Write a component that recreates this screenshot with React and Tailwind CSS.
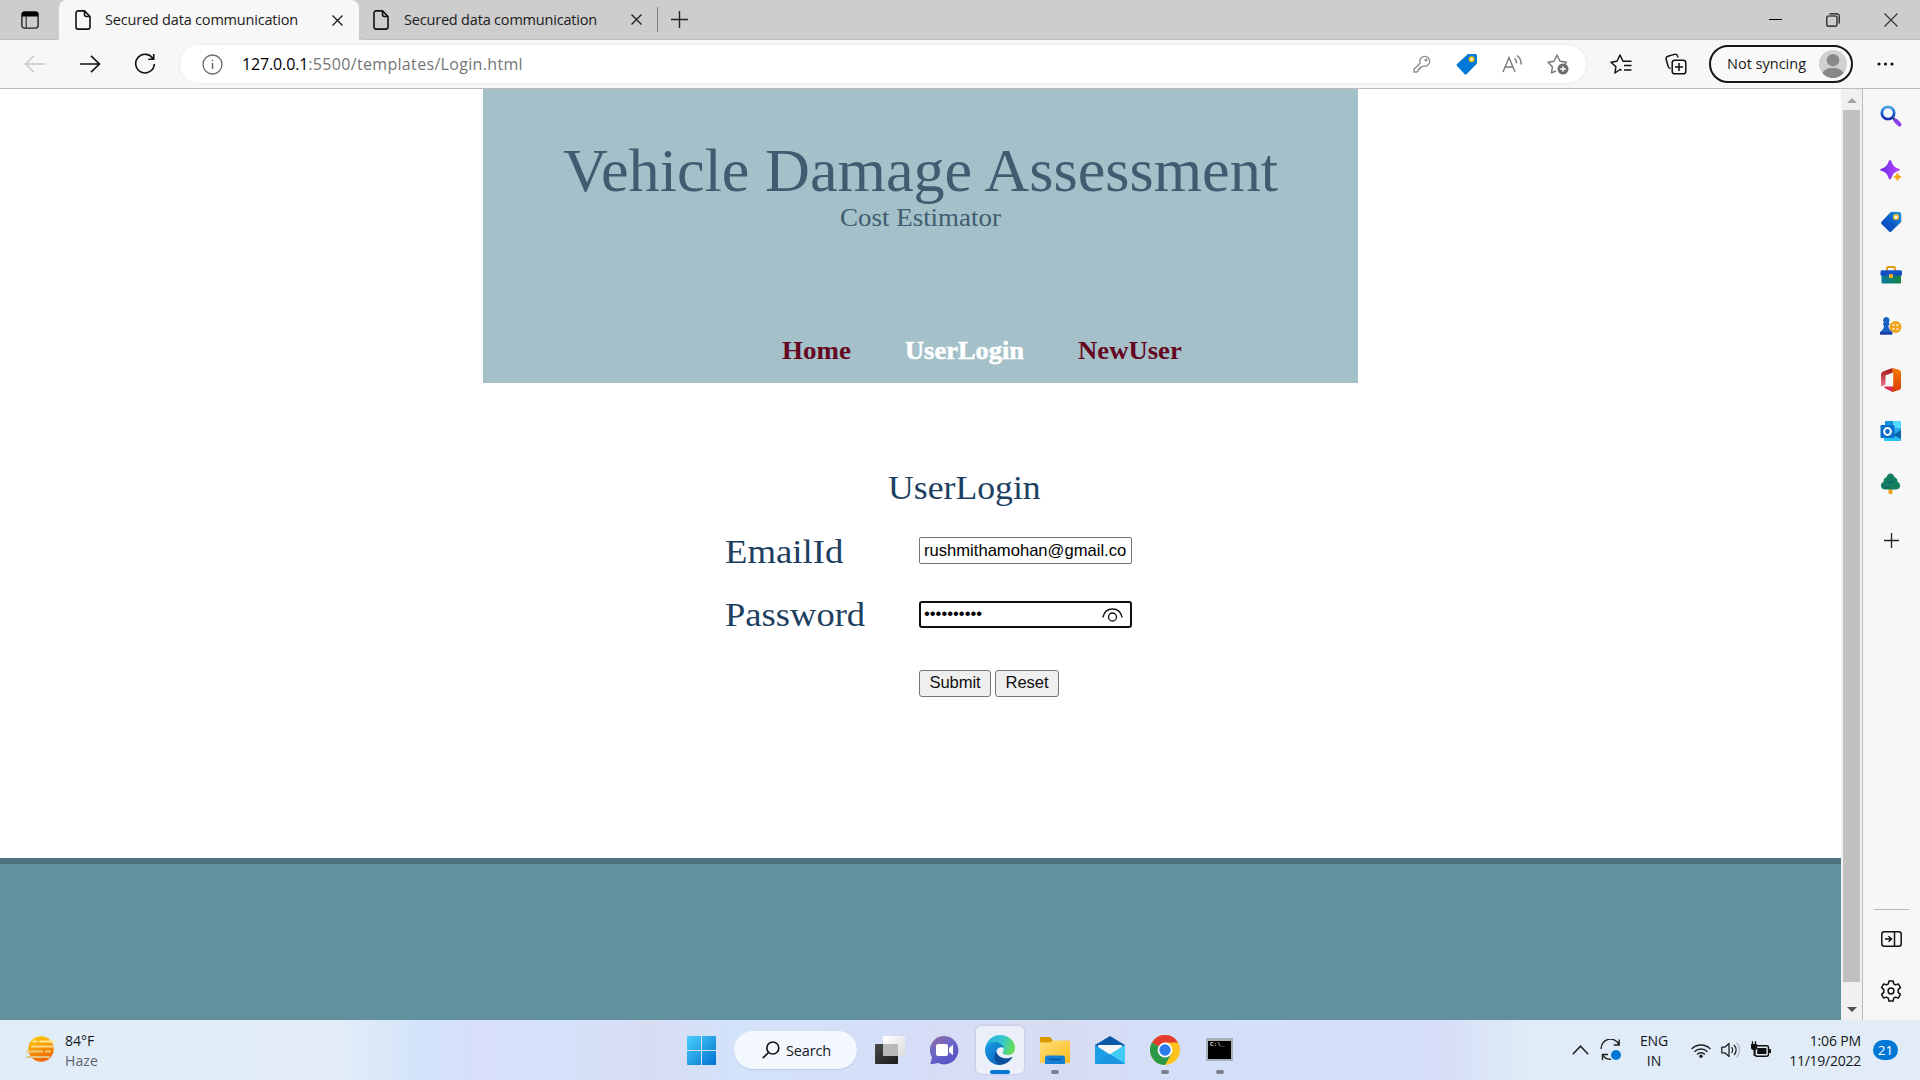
import React from "react";

const Doc = () => (
  <svg className="h-5 w-4 shrink-0" viewBox="0 0 16 20" fill="none" stroke="#111" strokeWidth="1.6" strokeLinejoin="round">
    <path d="M9.5 .9H3A2 2 0 0 0 1 2.9v14.2a2 2 0 0 0 2 2h10a2 2 0 0 0 2-2V6.5zM9.5 .9v3.6a2 2 0 0 0 2 2H15" />
  </svg>
);

const Cross = () => (
  <svg className="h-[11px] w-[11px] shrink-0" viewBox="0 0 11 11" stroke="#222" strokeWidth="1.4">
    <path d="M.5 .5l10 10M10.5 .5l-10 10" />
  </svg>
);

const Plus = () => (
  <svg className="h-[17px] w-[17px] shrink-0" viewBox="0 0 17 17" stroke="#222" strokeWidth="1.4">
    <path d="M8.5 0v17M0 8.5h17" />
  </svg>
);

function TabBar() {
  return (
    <div className="flex h-10 shrink-0 bg-[#cdcdcd]">
      <div className="flex w-[59px] items-center rounded-br-md border-b border-[#bdbdbd] pl-[21px]">
        <svg className="h-[18px] w-[18px]" viewBox="0 0 18 18">
          <rect x=".9" y=".9" width="16.2" height="16.2" rx="2.6" fill="none" stroke="#222" strokeWidth="1.4" />
          <path d="M.9 5.5V3A2.2 2.2 0 0 1 3.1.8h11.8A2.2 2.2 0 0 1 17.1 3v2.5z" fill="#000" />
          <path d="M5.2 5v12" stroke="#333" strokeWidth="1.2" />
        </svg>
      </div>
      <div className="flex w-[300px] items-center rounded-t-lg bg-[#f7f7f7] pl-4 pr-[16px]">
        <Doc />
        <span className="ml-[14px] flex-1 whitespace-nowrap text-[14.5px] leading-5 tracking-[-0.19px] text-[#1b1b1b]">Secured data communication</span>
        <Cross />
      </div>
      <div className="flex flex-1 items-center rounded-bl-md border-b border-[#bdbdbd] pl-[14px]">
        <Doc />
        <span className="ml-[15px] w-[227px] whitespace-nowrap text-[14.5px] leading-5 tracking-[-0.19px] text-[#1b1b1b]">Secured data communication</span>
        <Cross />
        <div className="ml-[15px] mr-[13px] h-[25px] w-px bg-[#808080]" />
        <Plus />
        <div className="ml-auto flex items-center pr-[22px]">
          <div className="mr-11 h-px w-[13px] bg-black" />
          <svg className="mr-11 h-[14px] w-[14px]" viewBox="0 0 14 14" fill="none" stroke="#111" strokeWidth="1.2">
            <rect x=".8" y="3" width="10.2" height="10.2" rx="1.5" />
            <path d="M3.5 .8h7.5a2.2 2.2 0 0 1 2.2 2.2v7.5" />
          </svg>
          <svg className="h-[14px] w-[14px]" viewBox="0 0 14 14" stroke="#333" strokeWidth="1.2">
            <path d="M.5 .5l13 13M13.5 .5l-13 13" />
          </svg>
        </div>
      </div>
    </div>
  );
}

function Toolbar() {
  return (
    <div className="flex h-[49px] shrink-0 items-center border-b border-[#bcbcbc] bg-[#f7f7f7] pl-6">
      <svg className="h-[18px] w-[21px]" viewBox="0 0 21 18" fill="none" stroke="#c8c8c8" strokeWidth="1.5">
        <path d="M21 9H1.5M10 .8L1.5 9l8.5 8.2" />
      </svg>
      <svg className="ml-[35px] h-[18px] w-[21px]" viewBox="0 0 21 18" fill="none" stroke="#111" strokeWidth="1.6">
        <path d="M0 9h19.5M11 .8L19.5 9 11 17.2" />
      </svg>
      <svg className="ml-[33px] h-[22px] w-[22px]" viewBox="0 0 22 22" fill="none" stroke="#111" strokeWidth="1.6">
        <path d="M19.2 6.2A9.3 9.3 0 1 0 20.3 11M19.7 1v5.3h-5.4" />
      </svg>
      <div className="ml-[24px] flex h-[38px] w-[1406px] items-center rounded-full bg-white pl-[22px] pr-[17px] shadow-[0_0_4px_rgba(0,0,0,0.07)]">
        <svg className="h-[21px] w-[21px]" viewBox="0 0 21 21" fill="none" stroke="#6c6c6c" strokeWidth="1.3">
          <circle cx="10.5" cy="10.5" r="9.5" />
          <path d="M10.5 9v6M10.5 5.7v1.6" strokeWidth="1.5" />
        </svg>
        <span className="ml-[19px] whitespace-nowrap text-[16px] leading-6 tracking-[-0.14px] text-black">127.0.0.1</span>
        <span className="whitespace-nowrap text-[16px] leading-6 tracking-[0.33px] text-[#757575]">:5500/templates/Login.html</span>
        <svg className="ml-auto h-[18px] w-[18px]" viewBox="0 0 18 18" fill="none" stroke="#8a8a8a" strokeWidth="1.3" strokeLinejoin="round">
          <path d="M7.1 8.2A5 5 0 1 1 10 11l-1.3 1.2H7v1.8H5.3v1.7L3.9 17H1v-2.8z" />
          <circle cx="13" cy="5" r=".9" />
        </svg>
        <svg className="ml-[25px] h-[22px] w-[22px]" viewBox="0 0 22 22">
          <path d="M12 1h7.5A1.7 1.7 0 0 1 21 2.7V10.5L10.5 21.2a1.2 1.2 0 0 1-1.7 0L1 12.9a1.5 1.5 0 0 1 0-2z" fill="#0078d7" />
          <circle cx="15.7" cy="6.3" r="2.2" fill="#fff" stroke="#f5b800" strokeWidth="1.6" />
        </svg>
        <svg className="ml-[24px] h-5 w-5" viewBox="0 0 20 20" fill="none" stroke="#777" strokeWidth="1.4">
          <path d="M1 18L7 3.5 13 18M3.2 13h7.6M12.5 4.2a6 6 0 0 1 2 5M15 1.5a10 10 0 0 1 4 9" />
        </svg>
        <svg className="ml-[25px] h-[22px] w-[22px]" viewBox="0 0 22 22" fill="none" stroke="#777" strokeWidth="1.4" strokeLinejoin="round">
          <path d="M9 18L4.5 19.8l.9-6L1 9.2l6-.9L10 2l3 6.3 6.5.9-1.5 2" />
          <circle cx="16" cy="16" r="5.5" fill="#6e6e6e" stroke="none" />
          <path d="M16 13.2v5.6M13.2 16h5.6" stroke="#fff" />
        </svg>
      </div>
      <svg className="ml-[24px] h-[22px] w-[22px]" viewBox="0 0 22 22" fill="none" stroke="#111" strokeWidth="1.5" strokeLinejoin="round">
        <path d="M11.5 17.2L10 16.5l-5 3.5.9-6.2L1 9.2l6-.9L10 2l3 6.3h8.5M14 12.5h7.5M14 17h7.5" />
      </svg>
      <svg className="ml-[33px] h-[22px] w-[22px]" viewBox="0 0 22 22" fill="none" stroke="#111" strokeWidth="1.5">
        <rect x="7.2" y="7.2" width="13.6" height="13.6" rx="2.6" />
        <path d="M14 10v8M10 14h8M5.5 15.5A3 3 0 0 1 3 13L1.2 6.5A2.6 2.6 0 0 1 3 3.3L9.5 1.4a2.6 2.6 0 0 1 3.2 1.8L13 4.5" />
      </svg>
      <div className="ml-[22px] flex h-[38px] w-[144px] items-center rounded-full border-2 border-[#161616] bg-[#f9f9f9] pl-[16px]">
        <span className="w-[92px] whitespace-nowrap text-[14.5px] leading-5 text-[#1b1b1b]">Not syncing</span>
        <svg className="h-7 w-7" viewBox="0 0 28 28">
          <circle cx="14" cy="14" r="14" fill="#d2d0ce" />
          <circle cx="14" cy="10.2" r="6.2" fill="#8a8886" />
          <path d="M3.5 23.2C4.5 20 8.5 18 14 18s9.500 2 10.5 5.2a14 14 0 0 1-21 0z" fill="#8a8886" />
        </svg>
      </div>
      <svg className="ml-6 h-1 w-[17px]" viewBox="0 0 17 4" fill="#111">
        <circle cx="2" cy="2" r="1.6" /><circle cx="8.5" cy="2" r="1.6" /><circle cx="15" cy="2" r="1.6" />
      </svg>
    </div>
  );
}

function Page() {
  return (
    <main className="flex w-[1841px] flex-col bg-white font-['Liberation_Serif',serif]">
      <header className="ml-[483px] flex h-[294px] w-[875px] flex-col bg-[#a4c0c9] pt-[50px] text-[#3f5c71]">
        <h1 className="scale-x-[1.028] whitespace-nowrap text-center text-[60.5px] leading-[64px]">Vehicle Damage Assessment</h1>
        <p className="scale-x-[1.065] text-center text-[25.3px] leading-[28px]">Cost Estimator</p>
        <nav className="mt-[106px] flex pl-[299px] text-[24.5px] font-bold leading-7 text-[#660722]">
          <a className="w-[123px] origin-left scale-x-[1.1]">Home</a>
          <a className="w-[173px] origin-left scale-x-[1.08] text-white [-webkit-text-stroke:0.5px_white]">UserLogin</a>
          <a className="origin-left scale-x-[1.09]">NewUser</a>
        </nav>
      </header>
      <form className="flex h-[475px] flex-col pl-[725px] pt-[85px] text-[34px] leading-10 text-[#1d3f61]">
        <h2 className="ml-[163px] w-[200px] origin-left scale-x-[1.05]">UserLogin</h2>
        <div className="mt-6 flex">
          <label className="w-[194px] origin-left scale-x-[1.08]">EmailId</label>
          <div className="mt-[5px] flex h-[27px] w-[213px] items-center rounded-[2px] border border-[#767676] pl-1 font-['Liberation_Sans',sans-serif] text-[16.6px] leading-5 text-black">
            rushmithamohan@gmail.co
          </div>
        </div>
        <div className="mt-[23px] flex">
          <label className="w-[194px] origin-left scale-x-[1.075]">Password</label>
          <div className="mt-[6px] flex h-[27px] w-[213px] items-center justify-between rounded-[3px] border-2 border-[#101010] pl-[3px] pr-[7px] font-['Liberation_Sans',sans-serif] text-[16.6px] leading-5 text-black">
            <span className="mb-0.5">••••••••••</span>
            <svg className="h-[14px] w-[21px]" viewBox="0 0 21 14" fill="none" stroke="#111" strokeWidth="1.3">
              <path d="M.8 9.5C2 4 6 1 10.5 1s8.500 3 9.7 8.5" />
              <circle cx="10.5" cy="9" r="4" />
            </svg>
          </div>
        </div>
        <div className="mt-[35px] flex gap-1 pl-[194px] font-['Liberation_Sans',sans-serif] text-[16.6px] leading-[22px] text-[#111]">
          <button type="button" className="h-[27px] w-[72px] rounded-[3px] border border-[#767676] bg-[#efefef] pb-px tracking-[-0.1px]">Submit</button>
          <button type="button" className="h-[27px] w-16 rounded-[3px] border border-[#767676] bg-[#efefef] pb-px tracking-[-0.1px]">Reset</button>
        </div>
      </form>
      <footer className="flex-1 border-t-[6px] border-[#4c727d] bg-[#61919f]" />
    </main>
  );
}

function ScrollBar() {
  return (
    <div className="flex w-[22px] flex-col items-center border-r border-[#bcbcbc] bg-[#f0f0f0]">
      <svg className="mt-[9px] h-[5px] w-[10px]" viewBox="0 0 10 5"><path d="M0 5l5-5 5 5z" fill="#a3a3a3" /></svg>
      <div className="mt-[7px] h-[872px] w-[17px] bg-[#c1c1c1]" />
      <svg className="mt-[25px] h-[5px] w-[10px]" viewBox="0 0 10 5"><path d="M0 0l5 5 5-5z" fill="#505050" /></svg>
    </div>
  );
}

function SideIcons() {
  const box = "h-6 w-6 shrink-0";
  return (
    <aside className="flex w-[57px] flex-col items-center bg-[#f7f7f7] pr-px pt-[15px]">
      <svg className={box} viewBox="0 0 24 24">
        <defs><linearGradient id="mag" x1="0" y1="0" x2="0" y2="1"><stop stopColor="#46a6e0" /><stop offset=".6" stopColor="#1251cc" /><stop offset="1" stopColor="#1b30b5" /></linearGradient></defs>
        <circle cx="9" cy="9" r="6.2" fill="#eef5fc" stroke="url(#mag)" strokeWidth="2.7" />
        <path d="M14 14l3 3" stroke="#3b3a75" strokeWidth="2.5" /><path d="M16.5 16.5l4 4" stroke="#8a3fe8" strokeWidth="4" strokeLinecap="round" />
      </svg>
      <svg className={`${box} mt-[31px]`} viewBox="0 0 24 24">
        <defs><linearGradient id="spark" x1="0" x2="1"><stop stopColor="#6a2be0" /><stop offset="1" stopColor="#b545ff" /></linearGradient></defs>
        <path d="M11 1q1.200 0 1.600 2Q14 8 19 9.400q2 .6 2 1.400t-2 1.300Q14 13.500 12.600 18.500 12 20.500 11 20.500t-1.600-2Q8 13.500 3 12.100 1 11.600 1 10.800T3 9.400Q8 8 9.400 3 9.900 1 11 1z" fill="url(#spark)" />
        <path d="M18.5 12.500q1 4.300 5 5.500-4 1.200-5 5-1.200-4-5-5 4-1.200 5-5.500z" fill="#f4a91c" stroke="#f7f7f7" strokeWidth=".6" />
      </svg>
      <svg className={`${box} mt-[27px]`} viewBox="0 0 24 24">
        <defs><linearGradient id="tag" x1="0" y1="1" x2="1" y2="0"><stop stopColor="#0a46b8" /><stop offset=".5" stopColor="#0c59c7" /><stop offset="1" stopColor="#219ad8" /></linearGradient></defs>
        <path d="M13 1.800l7.500.2a2 2 0 0 1 1.700 2v7.200c0 .7-.3 1-.8 1.600L12.300 21.600a1.600 1.600 0 0 1-2.200 0L2.500 14a1.600 1.600 0 0 1 0-2.200l8.800-9.200a2 2 0 0 1 1.700-.8z" fill="url(#tag)" />
        <circle cx="17" cy="7" r="2.300" fill="#fff" stroke="#f5bb2b" strokeWidth="1.500" />
      </svg>
      <svg className={`${box} mt-[29px]`} viewBox="0 0 24 24">
        <defs><linearGradient id="case" x1="0" x2="1"><stop stopColor="#087ba6" /><stop offset="1" stopColor="#16833d" /></linearGradient></defs>
        <path d="M8 7.500V5.200A1.200 1.200 0 0 1 9.200 4h5.600A1.200 1.200 0 0 1 16 5.200v2.300" fill="none" stroke="#e39a1f" strokeWidth="2" />
        <rect x="2.500" y="11" width="19.500" height="9.500" rx="1.200" fill="url(#case)" /><rect x="1.500" y="7.300" width="21.500" height="5.500" rx="1.500" fill="#1050c4" />
        <rect x="10" y="11" width="4" height="4" rx="1" fill="#f5ae28" />
      </svg>
      <svg className={`${box} mt-[28px]`} viewBox="0 0 24 24">
        <circle cx="16.500" cy="12" r="6" fill="#efa31d" /><g fill="#fff3d0"><circle cx="14.500" cy="10" r="1.100" /><circle cx="18.500" cy="10" r="1.100" /><circle cx="14.500" cy="14" r="1.100" /><circle cx="18.500" cy="14" r="1.100" /></g>
        <path d="M7.300 2a3.400 3.400 0 0 1 2.300 5.700l.9 1v1.500H9.300c.2 3 1.200 4.500 3 6 .8.700 1 1.800 1 3.300H1c0-1.500.2-2.600 1-3.300 2-1.500 2.900-3 3.100-6H4V8.700l1-1A3.400 3.400 0 0 1 7.300 2z" fill="#175fc0" />
        <path d="M1 17.200h12.300v2.300H1z" fill="#1c38a8" />
      </svg>
      <svg className={`${box} mt-[29px]`} viewBox="0 0 24 24">
        <defs><linearGradient id="ofl" x1="0" y1="0" x2="0" y2="1"><stop stopColor="#a3130f" /><stop offset="1" stopColor="#e8758f" /></linearGradient><linearGradient id="ofr" x1="0" y1="0" x2="0" y2="1"><stop stopColor="#f57a00" /><stop offset="1" stopColor="#d83b01" /></linearGradient></defs>
        <path d="M13.500 0L4 3.500Q2 4.300 2 6.500v11Q2 19 3.500 18l3-1.500V7.500L14 4.500z" fill="url(#ofl)" />
        <path d="M5.500 18.500H15V23.500l-2 .3-6.500-3.400q-1.500-1-1-1.900z" fill="#dc2a4e" />
        <path d="M13.500 0L20 1.800q2 .7 2 2.700v15q0 2-2 2.600L13 24l1.200-5V4.500z" fill="url(#ofr)" />
      </svg>
      <svg className={`${box} mt-[27px]`} viewBox="0 0 24 24">
        <rect x="6" y="2" width="16" height="18" rx="1" fill="#28a8ea" /><path d="M14 2h7a1 1 0 0 1 1 1v6h-8z" fill="#50d9ff" /><path d="M6 2h8v7H6z" fill="#1490df" />
        <path d="M5 12l9 4 8-4.500V21a1 1 0 0 1-1 1H6a1 1 0 0 1-1-1z" fill="#28c1f3" /><path d="M14 16l8-5v9z" fill="#0a63a9" />
        <rect x="1.500" y="6" width="14" height="13" rx="1.200" fill="#0a6fc9" /><circle cx="8.500" cy="12.500" r="3.400" fill="none" stroke="#fff" strokeWidth="2" />
      </svg>
      <svg className={`${box} mt-[29px]`} viewBox="0 0 24 24">
        <rect x="9.500" y="16" width="4" height="6" rx="1" fill="#eda21f" />
        <path d="M11.500 1.500c2 0 3.400 1.500 3.700 3.500 2.300.7 3.600 2.300 3.200 4.800 1.800.7 3 2.400 2.600 4.500-.4 2.200-2 3.200-4 3.200H6c-2 0-3.600-1-4-3.200-.3-2.100.8-3.800 2.600-4.500C4.200 7.300 5.500 5.700 7.800 5c.3-2 1.700-3.500 3.700-3.500z" fill="#128060" />
        <path d="M8 9a4 4 0 0 0 6 0M5 14a4 4 0 0 0 6 1" fill="none" stroke="#0b6170" strokeWidth="1.200" />
      </svg>
      <svg className="mt-[37px] h-[15px] w-[15px] shrink-0" viewBox="0 0 15 15" stroke="#222" strokeWidth="1.300"><path d="M7.500 0v15M0 7.500h15" /></svg>
      <div className="mt-[361px] h-px w-[35px] bg-[#b8b8b8]" />
      <svg className="mt-[21px] h-4 w-[21px] shrink-0" viewBox="0 0 21 16" fill="none" stroke="#111" strokeWidth="1.500">
        <rect x=".8" y=".8" width="19.400" height="14.400" rx="2.500" /><path d="M13.500 1v14M4 8h6M7.500 5.200L10.500 8l-3 2.800" />
      </svg>
      <svg className="mt-[33px] h-[22px] w-[22px] shrink-0" viewBox="0 0 22 22" fill="none" stroke="#111" strokeWidth="1.500" strokeLinejoin="round">
        <path d="M8.900 1h4.200l.6 2.900 1.800 1 2.800-1 2.100 3.700-2.200 2v2.800l2.200 2-2.100 3.700-2.800-1-1.800 1-.6 2.900H8.900l-.6-2.900-1.800-1-2.800 1-2.100-3.700 2.200-2V9.600l-2.200-2 2.100-3.700 2.800 1 1.800-1z" />
        <circle cx="11" cy="11" r="2.900" />
      </svg>
    </aside>
  );
}

function TaskApp({ children, running }) {
  return (
    <div className="flex h-12 w-[55px] flex-col items-center">
      <div className="mt-2 flex h-8 items-center justify-center">{children}</div>
      <div className={running ? "mt-1 h-1 w-2 rounded-full bg-[#7b7f8b]" : "h-1"} />
    </div>
  );
}

function TaskBar() {
  return (
    <div className="flex h-[60px] shrink-0 items-center bg-[linear-gradient(90deg,#e1edf6_0px,#e2edf8_340px,#d3e2fa_430px,#d8dff9_480px,#d5e2f9_560px,#d8dcf3_650px,#d3e3fa_740px,#d5def7_900px,#d8dcf2_1060px,#d3dffa_1180px,#d6def7_1440px,#e0ecf7_1530px,#e1ecf7_1920px)] text-[14px] leading-5 text-[#15181c]">
      <svg className="ml-[26px] mb-[3px] h-7 w-[29px]" viewBox="0 0 29 28">
        <defs><linearGradient id="sun" x1="0" y1="0" x2=".3" y2="1"><stop stopColor="#ffd000" /><stop offset="1" stopColor="#ef6707" /></linearGradient></defs>
        <circle cx="15" cy="14" r="12.700" fill="url(#sun)" />
        <g strokeLinecap="round" strokeWidth="2.200"><path d="M7.500 6.500h3M14 6.500h14" stroke="#ffe79b" /><path d="M6 11.500h20" stroke="#ffd98a" /><path d="M1 16.500h15M20 16.500h4" stroke="#eccb7c" /><path d="M1 22h22" stroke="#e3c583" /></g>
      </svg>
      <div className="ml-[10px] mt-0.5 w-[101px]">
        <div>84°F</div>
        <div className="tracking-[0.1px] text-[#5c636d]">Haze</div>
      </div>
      <svg className="ml-[521px] h-[29px] w-[29px]" viewBox="0 0 29 29">
        <defs><linearGradient id="win" x1="0" y1="0" x2="1" y2="1" ><stop stopColor="#4bd0fb" /><stop offset="1" stopColor="#0071d0" /></linearGradient></defs>
        <path d="M1 0h13v14H0V1a1 1 0 0 1 1-1zM15 0h13a1 1 0 0 1 1 1v13H15zM0 15h14v14H1a1 1 0 0 1-1-1zM15 15h14v13a1 1 0 0 1-1 1H15z" fill="url(#win)" />
      </svg>
      <div className="ml-[18px] flex h-[38px] w-[123px] items-center rounded-full bg-[#f3f7fe] pl-[28px] shadow-[0_1px_1px_rgba(120,130,170,0.25)]">
        <svg className="h-[18px] w-[18px]" viewBox="0 0 18 18" fill="none" stroke="#161616" strokeWidth="1.700"><circle cx="10.800" cy="7" r="6" /><path d="M6.500 11.500L.8 17.200" /></svg>
        <span className="ml-[6px] mt-0.5 text-[14.5px] tracking-[-0.15px]">Search</span>
      </div>
      <div className="ml-[5px] flex">
        <TaskApp>
          <svg className="h-7 w-[30px]" viewBox="0 0 30 28">
            <defs><linearGradient id="tv1" x1="0" y1="0" x2="1" y2="1"><stop stopColor="#4a4a4a" /><stop offset="1" stopColor="#1b1b1b" /></linearGradient><linearGradient id="tv2" x1="0" y1="0" x2="1" y2="1"><stop stopColor="#fff" /><stop offset="1" stopColor="#dcdcdc" /></linearGradient></defs>
            <rect y="8" width="23" height="20" rx="1" fill="url(#tv1)" /><rect x="8" width="22" height="20" rx="1" fill="url(#tv2)" /><path d="M8 8h15v12H8z" fill="#b9b9b9" />
          </svg>
        </TaskApp>
        <TaskApp>
          <svg className="h-[29px] w-[29px]" viewBox="0 0 29 29">
            <defs><linearGradient id="chat" x1="0" y1="0" x2=".6" y2="1"><stop stopColor="#976b98" /><stop offset=".45" stopColor="#6f68c5" /><stop offset="1" stopColor="#5654c8" /></linearGradient></defs>
            <path d="M14.500 0A14.200 14.200 0 1 1 8 27l-6.800 1.200a.8.800 0 0 1-.8-1L2 21.500A14.200 14.200 0 0 1 14.500 0z" fill="url(#chat)" />
            <rect x="6" y="8" width="12" height="12" rx="2" fill="#fff" /><path d="M19 12l4-3.200v10.400L19 16z" fill="#fff" />
          </svg>
        </TaskApp>
        <div className="mx-[3.5px] flex h-12 w-12 flex-col items-center rounded-[5px] bg-[#ebeffa] shadow-[0_0_2px_rgba(110,120,160,0.45)]">
          <svg className="mt-[9px] h-[30px] w-[30px]" viewBox="0 0 30 30">
            <defs>
              <linearGradient id="edA" x1="0" y1=".3" x2="1" y2=".5"><stop stopColor="#2aaee0" /><stop offset=".55" stopColor="#35c6cf" /><stop offset="1" stopColor="#66e04e" /></linearGradient>
              <linearGradient id="edB" x1="0" y1="0" x2=".7" y2="1"><stop stopColor="#1a9de2" /><stop offset="1" stopColor="#0b66c0" /></linearGradient>
            </defs>
            <path d="M.2 13.500C1.500 5.500 7.500 0 15 0c8.500 0 15 6 15 13 0 4.500-3.200 7-7 7-3.500 0-5.500-1.200-5.500-2.500 0-1 1.200-1.500 1.200-3.500 0-3-3-5.500-7.200-5.500C6 8.500 1.500 11 .2 13.500z" fill="url(#edA)" />
            <path d="M0 15C.2 10.500 4 7 9.500 7c5.500 0 8.800 3 9.200 6.500C17 11.500 12.500 11.700 11.500 16c-1.200 5.500 3.500 10 8 10.500-1.500 1.500-3.500 3.200-6 3.400C6 29.300 0 23 0 15z" fill="url(#edB)" />
            <path d="M11.300 16.500C7.500 21 10 27.500 14.500 30c6 0 11-4 13.300-8.200-1.500.8-4 1.500-6.500 1.500-5 0-9-2.800-10-6.800z" fill="#0d4f9e" />
          </svg>
          <div className="mt-[5px] h-1 w-5 rounded-full bg-[#0078d4]" />
        </div>
        <TaskApp running>
          <svg className="h-[27px] w-[30px]" viewBox="0 0 30 27">
            <defs><linearGradient id="fo" x1="0" y1="0" x2="1" y2="1"><stop stopColor="#ffe07a" /><stop offset="1" stopColor="#fcb91d" /></linearGradient></defs>
            <path d="M1 0h9l3 3.500V7H0V1a1 1 0 0 1 1-1z" fill="#dc9a02" /><path d="M13 3.500h16a1 1 0 0 1 1 1V26H0V5.500h10z" fill="url(#fo)" />
            <path d="M5 27v-6a2.500 2.500 0 0 1 2.500-2.500h15A2.500 2.500 0 0 1 25 21v6z" fill="#127ed4" /><path d="M9 22.500h12" stroke="#0b559c" strokeWidth="1.300" />
          </svg>
        </TaskApp>
        <TaskApp>
          <svg className="h-7 w-[30px]" viewBox="0 0 30 28">
            <path d="M0 9L15 0l15 9v4H0z" fill="#0c58a8" /><path d="M3 9h24v8L15 22 3 16z" fill="#f5f6f7" />
            <path d="M0 9l15 9.500L30 9v18.500H0z" fill="#1d9ee6" /><path d="M30 9v18.500L15 18.500z" fill="#43cdf6" /><path d="M0 28l15-9.500L30 28z" fill="#1c95e0" />
          </svg>
        </TaskApp>
        <TaskApp running>
          <svg className="h-[30px] w-[30px]" viewBox="0 0 30 30">
            <circle cx="15" cy="15" r="15" fill="#fcc31e" />
            <path d="M15 15L2 7.500A15 15 0 0 1 28 7.500H15z" fill="#e33b2e" />
            <path d="M2 7.500A15 15 0 0 0 15 30l6.500-11.300L15 15z" fill="#2b9a47" />
            <circle cx="15" cy="15" r="7.400" fill="#fff" /><circle cx="15" cy="15" r="5.700" fill="#2e7bee" />
          </svg>
        </TaskApp>
        <TaskApp running>
          <div className="mb-0.5 flex h-[23px] w-[27px] border-2 border-t-[3px] border-[#aab0b8] bg-black pl-0.5">
            <span className="font-['Liberation_Mono',monospace] text-[6px] font-bold leading-[8px] text-[#ddd]">C:\_</span>
          </div>
        </TaskApp>
      </div>
      <div className="ml-auto flex items-center pr-[22px]">
        <svg className="h-[10px] w-[17px]" viewBox="0 0 17 10" fill="none" stroke="#222" strokeWidth="1.500"><path d="M.8 9.200L8.500 1.200l7.700 8" /></svg>
        <svg className="ml-[11px] h-[22px] w-[22px]" viewBox="0 0 22 22" fill="none" stroke="#222" strokeWidth="1.400">
          <path d="M1.200 10A9.300 9.300 0 0 1 19 5.700M19.200 .5v5.500h-5.500M2.500 21v-5.500H8M2.700 15.800a9.300 9.300 0 0 0 8.300 4.500" />
          <circle cx="16" cy="16" r="5" fill="#0078d7" stroke="none" />
        </svg>
        <div className="ml-[16px] mt-0.5 w-[32px] text-center tracking-[-0.1px]"><div>ENG</div><div>IN</div></div>
        <svg className="ml-[21px] h-[15px] w-5" viewBox="0 0 20 15" fill="none" stroke="#222" strokeWidth="1.500">
          <path d="M.7 6a13 13 0 0 1 18.600 0M3.500 8.700a9.200 9.200 0 0 1 13 0M6.200 11.400a5.400 5.400 0 0 1 7.600 0" /><circle cx="10" cy="13.200" r="1.700" fill="#222" stroke="none" />
        </svg>
        <svg className="ml-[10px] h-4 w-5" viewBox="0 0 20 16" fill="none" stroke="#222" strokeWidth="1.300" strokeLinejoin="round">
          <path d="M.8 5.200h3L8 1.500v13L3.800 10.800h-3zM10.500 5.200a4 4 0 0 1 0 5.600M13 3a7 7 0 0 1 0 10" /><path d="M15.500 .8a10 10 0 0 1 0 14.400" stroke="#b3bac2" />
        </svg>
        <svg className="mb-0.5 ml-[10px] h-[17px] w-5" viewBox="0 0 20 17">
          <rect x="4" y="4.800" width="13.500" height="10.400" rx="2" fill="none" stroke="#111" strokeWidth="1.400" /><rect x="6.200" y="7" width="9.200" height="6" fill="#111" /><rect x="18" y="8" width="2" height="4" rx=".5" fill="#111" />
          <path d="M0 3h6.200v3.500A2.500 2.500 0 0 1 3.700 9v6H2.500V9A2.500 2.500 0 0 1 0 6.500z" fill="#111" /><path d="M1.500 .3v3M4.500 .3v3" stroke="#111" strokeWidth="1.300" />
        </svg>
        <div className="ml-[18px] mt-px w-[72px] whitespace-nowrap text-right"><div className="tracking-[-0.15px]">1:06 PM</div><div className="tracking-[-0.25px]">11/19/2022</div></div>
        <div className="ml-3 flex h-5 w-[25px] items-center justify-center rounded-full bg-[#0078d7] text-[13.5px] leading-5 text-white">21</div>
      </div>
    </div>
  );
}

export default function App() {
  return (
    <div className="flex h-[1080px] w-[1920px] flex-col overflow-hidden font-['Open_Sans',sans-serif]">
      <TabBar />
      <Toolbar />
      <div className="flex h-[931px] shrink-0">
        <Page />
        <ScrollBar />
        <SideIcons />
      </div>
      <TaskBar />
    </div>
  );
}
